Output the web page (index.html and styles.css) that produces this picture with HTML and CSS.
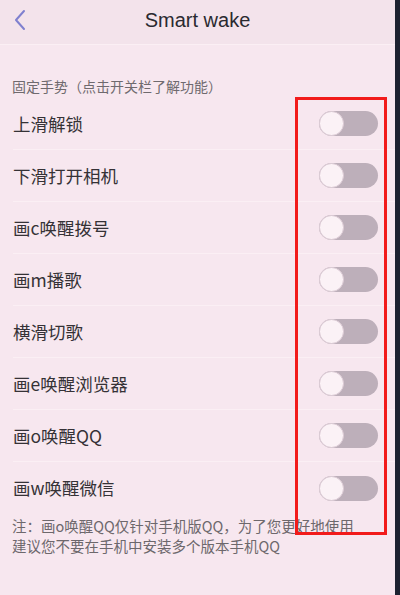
FILE: index.html
```html
<!DOCTYPE html>
<html>
<head>
<meta charset="utf-8">
<link rel="stylesheet" href="styles.css">
</head>
<body>
<div class="screen">
  <div class="header">
    <svg class="back" width="14" height="22" viewBox="0 0 14 22"><path d="M11 2 L3 11 L11 20" fill="none" stroke="#7f80cf" stroke-width="2" stroke-linecap="round" stroke-linejoin="round"/></svg>
    <div class="title">Smart wake</div>
  </div>
  <div class="section">固定手势（点击开关栏了解功能）</div>
  <div class="list">
    <div class="row"><span class="label">上滑解锁</span><span class="toggle"><span class="knob"></span></span></div>
    <div class="row"><span class="label">下滑打开相机</span><span class="toggle"><span class="knob"></span></span></div>
    <div class="row"><span class="label">画c唤醒拨号</span><span class="toggle"><span class="knob"></span></span></div>
    <div class="row"><span class="label">画m播歌</span><span class="toggle"><span class="knob"></span></span></div>
    <div class="row"><span class="label">横滑切歌</span><span class="toggle"><span class="knob"></span></span></div>
    <div class="row"><span class="label">画e唤醒浏览器</span><span class="toggle"><span class="knob"></span></span></div>
    <div class="row"><span class="label">画o唤醒QQ</span><span class="toggle"><span class="knob"></span></span></div>
    <div class="row last"><span class="label">画w唤醒微信</span><span class="toggle"><span class="knob"></span></span></div>
  </div>
  <div class="note">注：画o唤醒QQ仅针对手机版QQ，为了您更好地使用<br>建议您不要在手机中安装多个版本手机QQ</div>
  <div class="highlight"></div>
</div>
</body>
</html>
```
FILE: styles.css
```css
html, body {
  margin: 0;
  padding: 0;
}
body {
  width: 400px;
  height: 595px;
  overflow: hidden;
  background: #f7e7ef;
  font-family: "Noto Sans CJK SC", "Noto Sans", sans-serif;
}
.screen {
  position: relative;
  width: 395px;
  height: 595px;
  background: #f7e7ef;
  border-right: 5px solid #1d2130;
}
.header {
  position: relative;
  height: 44px;
  display: flex;
  align-items: center;
  justify-content: center;
  background: #f3e3eb;
  border-bottom: 1px solid #fbeff4;
}
.back {
  position: absolute;
  left: 13px;
  top: 9px;
}
.title {
  font-family: "Liberation Sans", "Noto Sans", sans-serif;
  font-size: 20px;
  color: #2a2a30;
  margin-top: -3px;
}
.section {
  height: 53px;
  box-sizing: border-box;
  padding: 31px 0 0 12px;
  font-size: 14px;
  line-height: 20px;
  color: #6f6a6e;
}
.list {
  display: flex;
  flex-direction: column;
}
.row {
  height: 52px;
  box-sizing: border-box;
  margin-left: 13px;
  display: flex;
  align-items: center;
  justify-content: space-between;
  border-bottom: 1px solid #fbeff4;
}
.row.last {
  border-bottom: none;
}
.label {
  font-size: 17.5px;
  color: #353236;
  line-height: 24px;
}
.toggle {
  width: 59px;
  height: 25px;
  border-radius: 13px;
  background: #bdafba;
  margin-right: 17px;
  display: flex;
  align-items: center;
}
.knob {
  width: 23px;
  height: 23px;
  border-radius: 50%;
  background: #fbf2f6;
  border: 1px solid #dccbd5;
}
.note {
  padding: 2px 0 0 12px;
  font-size: 14.5px;
  line-height: 20px;
  color: #6d686c;
}
.highlight {
  position: absolute;
  left: 295px;
  top: 97px;
  width: 92px;
  height: 438px;
  box-sizing: border-box;
  border: 3px solid #f21b1b;
}
```
